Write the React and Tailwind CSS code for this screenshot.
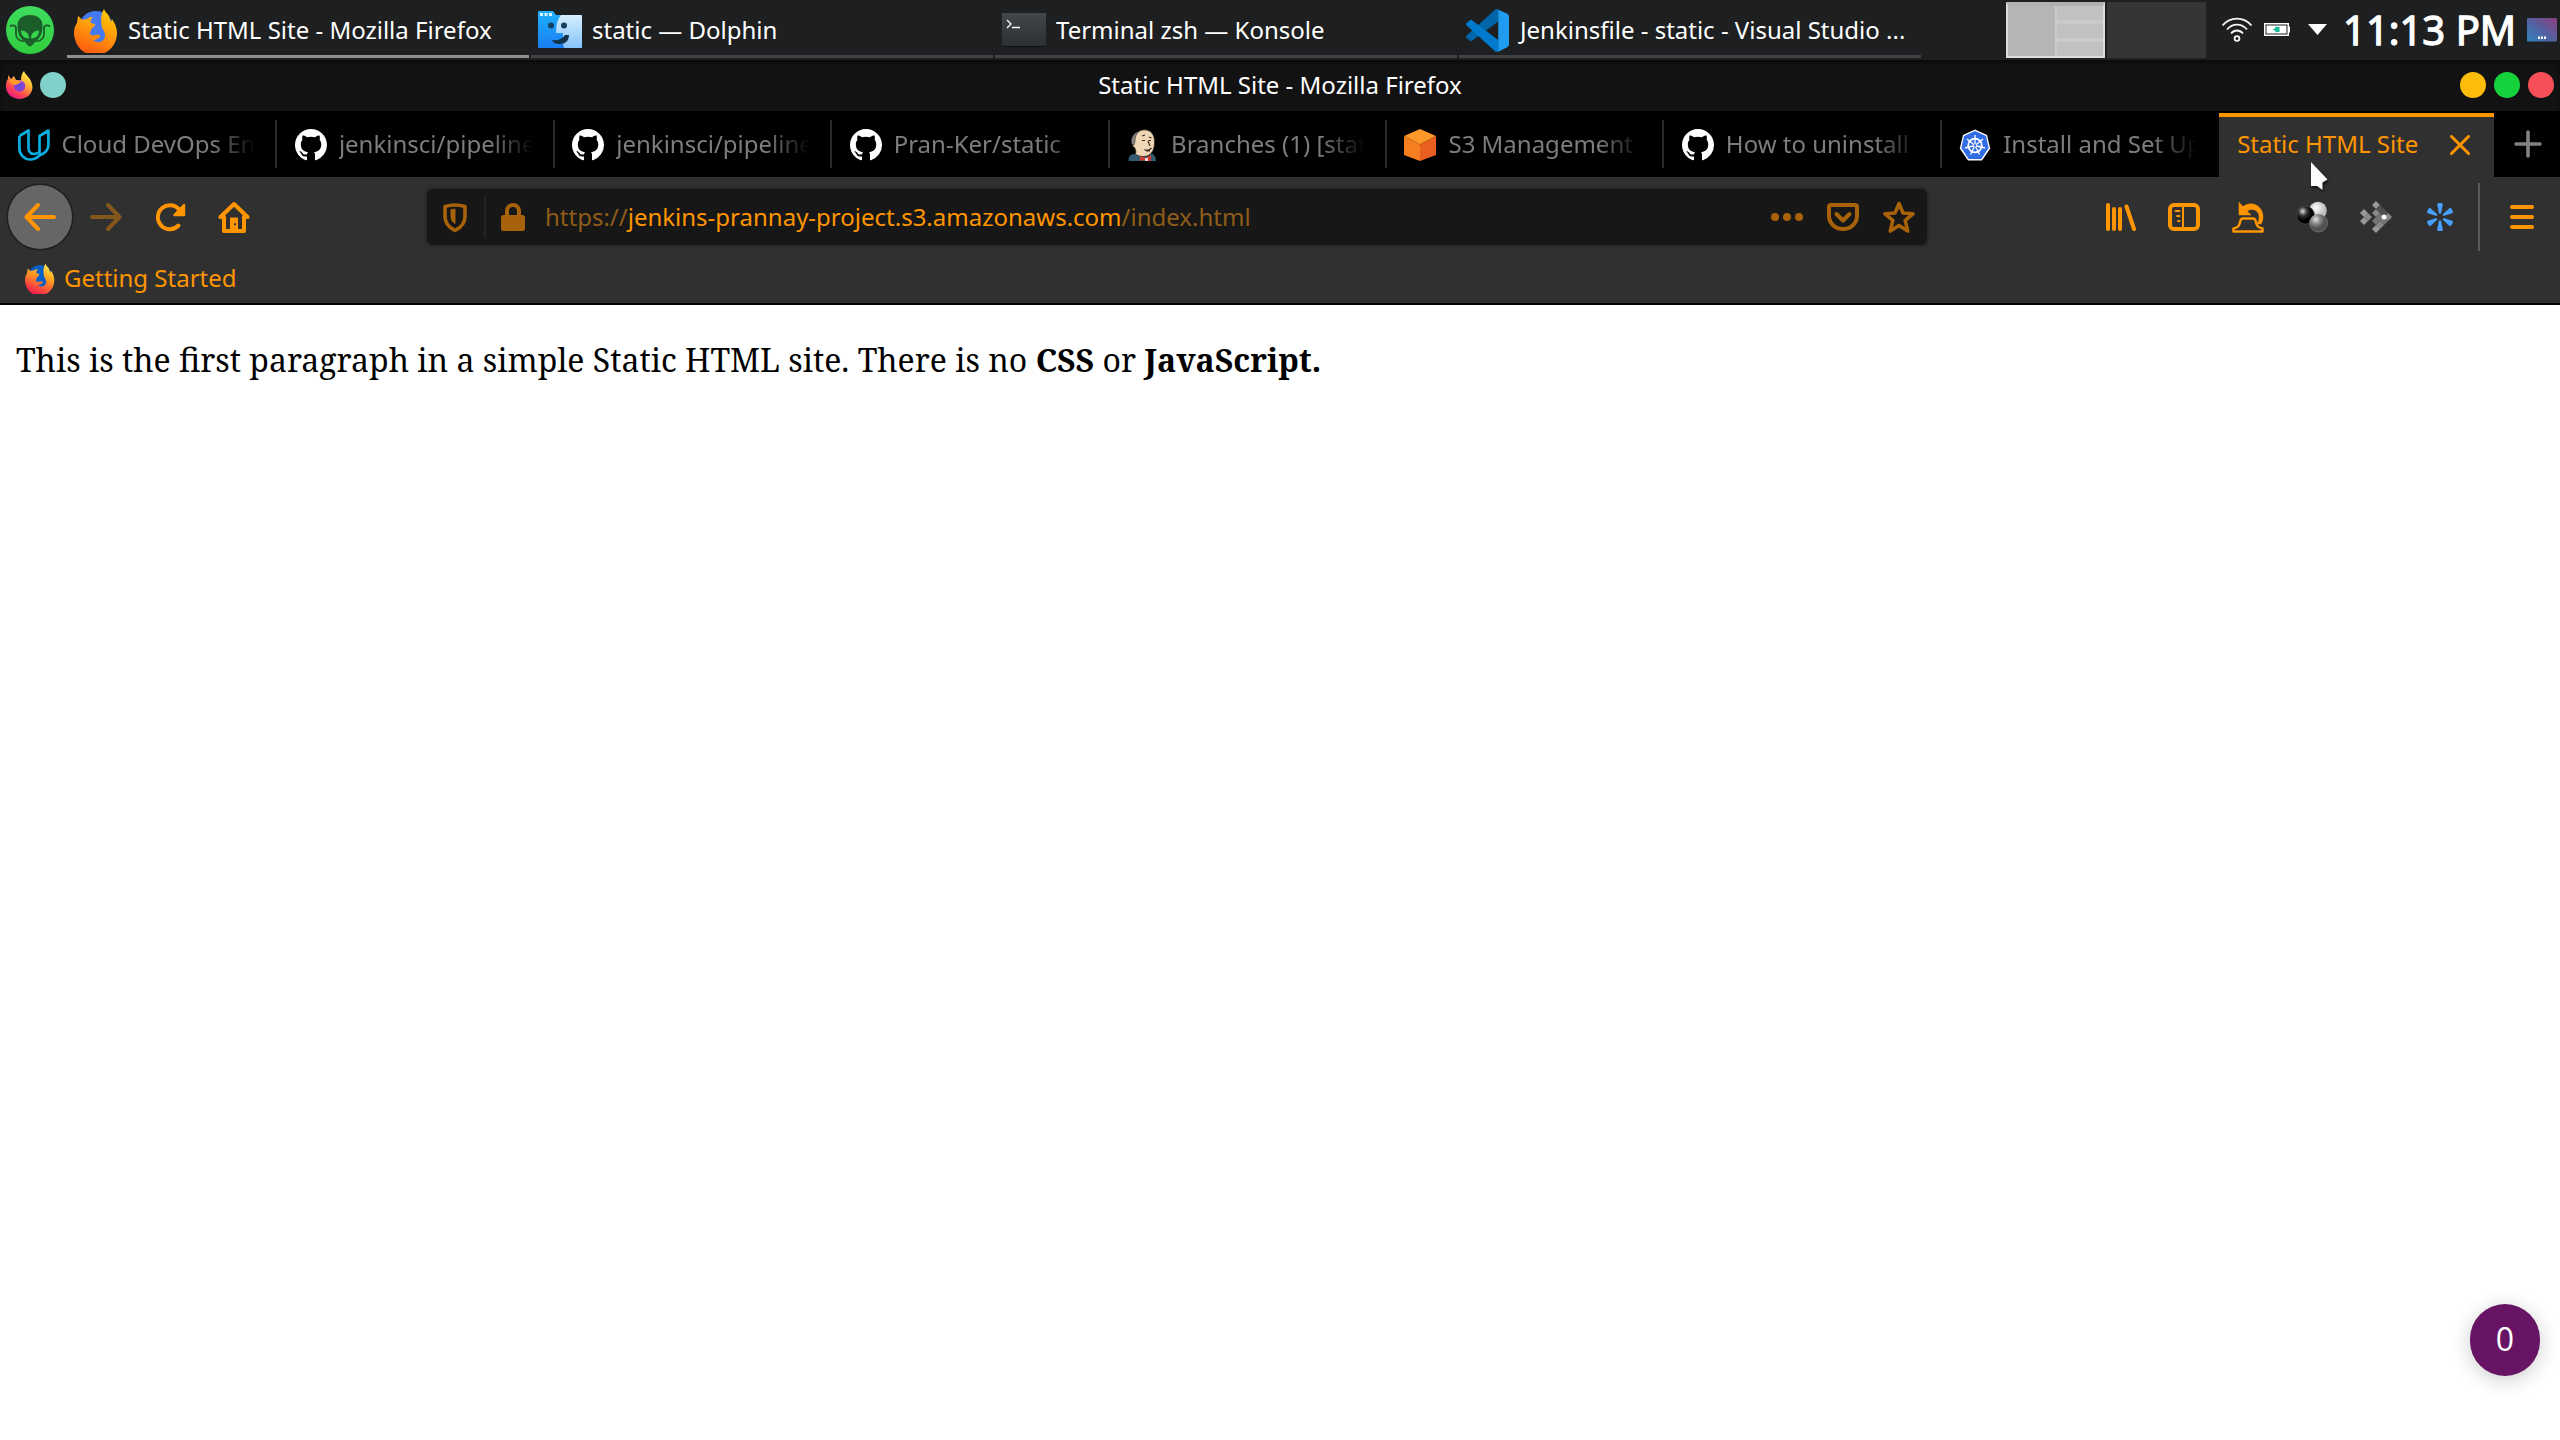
import React from "react";

const O = "#ff9500";
const D = "#a8620a";

const Alien = () => (
  <svg width="48" height="48" viewBox="0 0 48 48">
    <defs>
      <linearGradient id="alienBg" x1="0" y1="0" x2="0" y2="1">
        <stop offset="0" stopColor="#3fdc60" />
        <stop offset="1" stopColor="#30ce3c" />
      </linearGradient>
    </defs>
    <circle cx="24" cy="24" r="24" fill="url(#alienBg)" />
    <path d="M24 9c8 0 12.500 4 12.500 11 0 6-1.500 10-5 14-3 2-5.500 6.500-7.500 6.500s-4.500-4.500-7.500-6.500c-3.500-4-5-8-5-14C11.500 13 16 9 24 9Z" fill="#1b5e2a" />
    <path d="M4 20.500c2-2 6-1.500 6 2 0 6-1 9 4 12l4 1M44 20.500c-2-2-6-1.500-6 2 0 6 1 9-4 12l-4 1" fill="none" stroke="#1b5e2a" strokeWidth="1.800" />
    <path d="M15 24.500c5 0 8 3 8 8-5 0-8-3-8-8ZM33 24.500c-5 0-8 3-8 8 5 0 8-3 8-8Z" fill="#37d44c" />
  </svg>
);

const FirefoxOld = ({ w, h, id, globe, a, b, c }) => (
  <svg width={w} height={h} viewBox="0 0 44 45" preserveAspectRatio="none">
    <defs>
      <linearGradient id={id} x1="0.800" y1="0" x2="0.400" y2="1">
        <stop offset="0" stopColor={a} />
        <stop offset="0.450" stopColor={b} />
        <stop offset="1" stopColor={c} />
      </linearGradient>
    </defs>
    <circle cx="22" cy="20.500" r="17.500" fill={globe} />
    <path
      d="M4 8c2 1 3 3 4 4 2-1 4-1 5-1 2-2 4-2 6-2-2 2-3 4-2 6 2 1 4 0 4 2s-3 2-4 5c0 2-2 3-1 4 3 3 6 0 8 1 2 0 3 1 2 2-2 1-3 3-7 3 3 3 9 3 11-1 2-3 1-7-2-11-1-7-2-12 2-19 1 3 3 4 5 7l2 6 1-3c3 4 5 9 5 14 0 12-9 22-22 22S1 37 0 26c0-6 1-8 3-11Z"
      fill={`url(#${id})`}
    />
  </svg>
);

const FirefoxNew = () => (
  <svg width="27" height="28" viewBox="0 0 27 28">
    <defs>
      <linearGradient id="ffn" x1="0.850" y1="0.050" x2="0.250" y2="1">
        <stop offset="0" stopColor="#fff44f" />
        <stop offset="0.350" stopColor="#ffb436" />
        <stop offset="0.700" stopColor="#ff4a4e" />
        <stop offset="1" stopColor="#e31587" />
      </linearGradient>
      <radialGradient id="ffg"><stop offset="0" stopColor="#5a4fe0" /><stop offset="1" stopColor="#9b3fd0" /></radialGradient>
    </defs>
    <path d="M2 4l3 4 3-3 2 4 5 0c0-4 1-7 3-9 1 4 8 7 8.500 16C26.500 23 20.500 28 13.500 28S0 23 0 16C0 11 1 9 2 8Z" fill="url(#ffn)" />
    <circle cx="13.500" cy="15" r="5.800" fill="url(#ffg)" />
    <path d="M3 9c5-1 9 0 13 2-3 0-3 3-8 3-2-1-4-3-5-5Z" fill="#ff9a2a" />
  </svg>
);

const Dolphin = () => (
  <svg width="44" height="38" viewBox="0 0 44 38">
    <defs>
      <linearGradient id="dl" x1="0" y1="0" x2="0" y2="1"><stop offset="0" stopColor="#1fb2fb" /><stop offset="1" stopColor="#1a7df3" /></linearGradient>
      <linearGradient id="dr" x1="0" y1="0" x2="0" y2="1"><stop offset="0" stopColor="#d5effd" /><stop offset="1" stopColor="#86c3fb" /></linearGradient>
    </defs>
    <path d="M0 1Q0 0 1 0H15l3 4H43q1 0 1 1V36q0 1-1 1H1q-1 0-1-1Z" fill="url(#dl)" />
    <path d="M23 4H43q1 0 1 1V36q0 1-1 1H26q-2-5-1-9 0-4 0-6H18q0-12 5-18Z" fill="url(#dr)" />
    <ellipse cx="13" cy="14.500" rx="3" ry="3" fill="#123f5c" />
    <ellipse cx="26" cy="14.500" rx="3" ry="3" fill="#123f5c" />
    <path d="M14 29c6 1 10-1 13-5h4c0 6-4 9-9 9-4 0-7-1-8-4Z" fill="#12324a" />
    <path d="M2 2h3v3H2zM6.500 2h3v3h-3zM11 2h3v3h-3z" fill="#d9f2ff" />
  </svg>
);

const Konsole = () => (
  <svg width="44" height="34" viewBox="0 0 44 34">
    <defs><linearGradient id="kg" x1="0" y1="0" x2="0" y2="1"><stop offset="0" stopColor="#42474b" /><stop offset="1" stopColor="#2b2f33" /></linearGradient></defs>
    <rect y="1" width="44" height="33" rx="1" fill="#0e0f10" />
    <rect width="44" height="33" rx="1" fill="url(#kg)" />
    <path d="M5 7l4 4-4 4M10 14.500h8" fill="none" stroke="#fff" strokeWidth="1.300" />
  </svg>
);

const VSCode = () => (
  <svg width="43" height="43" viewBox="0 0 100 100">
    <path d="M1 67 9 74Q11 76 14 74L75 29V2Q69 0 65 4L1 62Q-1 65 1 67Z" fill="#0065a9" />
    <path d="M1 33 9 26Q11 24 14 26L75 72V98Q69 100 65 96L1 38Q-1 35 1 33Z" fill="#007acc" />
    <path d="M71 99Q67 100 65 96 75 102 75 95V5Q75-2 65 4 68-1 74 1L96 11Q100 13 100 18V82Q100 87 96 89L76 99Q73 100 71 99Z" fill="#1f9cf0" />
  </svg>
);

const Wifi = () => (
  <svg width="32" height="26" viewBox="0 0 32 26" fill="none" stroke="#f4f4f4" strokeWidth="1.800">
    <path d="M1.500 8.500C9-.8 23-.8 30.500 8.500M6 12.500c5.500-6.500 14.500-6.500 20 0M10 16.500c3.500-4 8.500-4 12 0" />
    <circle cx="16" cy="21.500" r="2.400" />
  </svg>
);

const Battery = () => (
  <svg width="27" height="14" viewBox="0 0 27 14">
    <rect x="0.750" y="0.750" width="23.500" height="11.500" fill="none" stroke="#fff" strokeWidth="1.500" />
    <rect x="2.500" y="2.500" width="20" height="8" fill="#fff" />
    <rect x="24.500" y="3.500" width="1.500" height="6" fill="#fff" />
    <path d="M9 6.500h3M15.500 4.500h-2.500v4h2.500M13 4c-1.500 0-2 1-2 2.500s.5 2.500 2 2.500Z" fill="#1abc9c" stroke="#1abc9c" />
  </svg>
);

const DesktopIcon = () => (
  <svg width="30" height="24" viewBox="0 0 30 24">
    <defs><linearGradient id="dg" x1="0" y1="1" x2="1" y2="0"><stop offset="0" stopColor="#2d83bd" /><stop offset="0.500" stopColor="#5560a0" /><stop offset="1" stopColor="#8e3c7c" /></linearGradient></defs>
    <rect width="30" height="23.500" rx="1" fill="url(#dg)" />
    <path d="M11 18.500h2v2.500h-2zM14 18.500h2v2.500h-2zM17 18.500h2v2.500h-2z" fill="#fff" />
  </svg>
);

const Udacity = () => (
  <svg width="32" height="32" viewBox="0 0 32 32" fill="none" stroke="#08aee0" strokeWidth="2.700" strokeLinejoin="round">
    <path d="M1.400 7 10.500 1.500V19c0 4 2.500 6 5.500 6s5.500-2 5.500-2M1.400 7V19c0 7 5 11.500 11 11.500 4 0 7-2 9-4l4-2c3-2 5-5 5-9V1.500L21.500 7V25" />
  </svg>
);

const Jenkins = () => (
  <svg width="32" height="32" viewBox="0 0 32 32">
    <path d="M1.500 32c0-5 2-6.500 6-7l15-1c4 .5 6.500 3 6.500 8Z" fill="#335b70" />
    <path d="M8 25c2-2 0-4 0-6-3-1-3-6-1-9C8 4 13 .8 17.500 .8c6.500 0 10 5 10 11.500 0 6-1 10-4.500 13-4 3-10 3-15-.3Z" fill="#efd6b4" stroke="#2a2420" strokeWidth="0.800" />
    <path d="M5 15.500C3 10 6 4 12 2.200c-3 3-4 6-4 9.800l-1 4Z" fill="#8a8580" stroke="#222" strokeWidth="0.500" />
    <path d="M15 7l3-1M22 8l2.500 1M15 11.500h3M21.500 11.500h2.500M21 12l2 5M17.500 20.500c2 1.500 5 .5 7-1.500M19 22h4" fill="none" stroke="#3b2a20" strokeWidth="1.200" />
    <path d="M13 27l5 2 6-3v6h-4l-2-1-5 1Z" fill="#d33833" />
    <path d="M18 29h3v3h-3z" fill="#fff" opacity="0.800" />
  </svg>
);

const S3 = () => (
  <svg width="32" height="32" viewBox="0 0 32 32">
    <path d="M16 0 32 7 16 15.500 0 7Z" fill="#fb9827" />
    <path d="M0 7 16 15.500V32L0 26Z" fill="#f57f20" />
    <path d="M32 7 16 15.500V32l16-6Z" fill="#e85f1f" />
  </svg>
);

const Kube = () => (
  <svg width="32" height="32" viewBox="0 0 32 32">
    <path d="M16 .5 28 6l3.200 13.500L23 31.500H9L.8 19.500 4 6Z" fill="#fff" />
    <path d="M16 2 27 7l2.600 12L22.300 30H9.700L2.400 19 5 7Z" fill="#326ce5" />
    <g fill="none" stroke="#fff">
      <circle cx="16" cy="16.500" r="6.800" strokeWidth="1.800" />
      <path d="M16 6v9M16 16.500 8 10M16 16.500l8-6.500M16 16.500 6 19M16 16.500 26 19M16 16.500l-4.500 9M16 16.500l4.500 9" strokeWidth="1.300" />
    </g>
    <circle cx="16" cy="16.500" r="1.300" fill="#326ce5" />
  </svg>
);

const Github = () => (
  <svg width="32" height="32" viewBox="0 0 16 16" fill="#fff">
    <path d="M8 0C3.580 0 0 3.580 0 8c0 3.540 2.290 6.530 5.470 7.590.4.070.55-.17.55-.38 0-.19-.01-.82-.01-1.490-2.010.37-2.530-.49-2.690-.94-.09-.23-.48-.94-.82-1.130-.28-.15-.68-.52-.01-.53.63-.01 1.080.58 1.230.82.72 1.210 1.870.87 2.330.66.07-.52.28-.87.51-1.070-1.780-.2-3.640-.89-3.640-3.950 0-.87.31-1.590.82-2.150-.08-.2-.36-1.020.08-2.120 0 0 .67-.21 2.200.82.64-.18 1.320-.27 2-.27s1.360.09 2 .27c1.530-1.040 2.200-.82 2.200-.82.44 1.100.16 1.920.08 2.120.51.56.82 1.270.82 2.150 0 3.070-1.870 3.750-3.650 3.950.29.25.54.73.54 1.480 0 1.070-.01 1.930-.01 2.200 0 .21.15.46.55.38A8.010 8.010 0 0 0 16 8c0-4.420-3.580-8-8-8Z" />
  </svg>
);

const Stroke = ({ w = 32, h = 32, color = O, sw = 4, children }) => (
  <svg width={w} height={h} viewBox={`0 0 ${w} ${h}`} fill="none" stroke={color} strokeWidth={sw} strokeLinecap="round" strokeLinejoin="round">
    {children}
  </svg>
);

const tasks = [
  { icon: <FirefoxOld w={44} h={45} id="ffa" globe="#4479f0" a="#ffcb00" b="#ff9f0a" c="#ff5a10" />, label: "Static HTML Site - Mozilla Firefox", active: true },
  { icon: <Dolphin />, label: "static — Dolphin" },
  { icon: <Konsole />, label: "Terminal zsh — Konsole" },
  { icon: <VSCode />, label: "Jenkinsfile - static - Visual Studio ..." },
];

const tabs = [
  { icon: <Udacity />, label: "Cloud DevOps En" },
  { icon: <Github />, label: "jenkinsci/pipeline" },
  { icon: <Github />, label: "jenkinsci/pipeline" },
  { icon: <Github />, label: "Pran-Ker/static" },
  { icon: <Jenkins />, label: "Branches (1) [stat" },
  { icon: <S3 />, label: "S3 Management" },
  { icon: <Github />, label: "How to uninstall" },
  { icon: <Kube />, label: "Install and Set Up" },
];

function Panel() {
  return (
    <div className="flex h-[60px] items-center bg-[#1d1f21]">
      <div className="flex w-[67px] shrink-0 pl-[6px]"><Alien /></div>
      <div className="flex h-full gap-[2px]">
        {tasks.map((t) => (
          <div key={t.label} className="flex h-full w-[462px] flex-col">
            <div className="flex h-[55px] items-center pt-[5px] pl-[7px] text-white">
              <div className="flex w-[54px]">{t.icon}</div>
              <span className="whitespace-nowrap text-[24px]">{t.label}</span>
            </div>
            <div className={t.active ? "h-[3px] bg-[#8e9091]" : "h-[3px] bg-[#424346]"} />
          </div>
        ))}
      </div>
      <div className="ml-[85px] flex h-[56px] gap-[2px]">
        <div className="flex w-[99px] gap-[2px] border-2 border-t-[4px] border-[#dcdcdc] border-t-[#b0b0b0] bg-[#cacaca]">
          <div className="w-[47px] bg-[#b5b5b5]" />
          <div className="flex flex-1 flex-col gap-[4px]">
            <div className="flex-1 bg-[#c1c1c1]" />
            <div className="flex-1 bg-[#c1c1c1]" />
            <div className="flex-1 bg-[#c1c1c1]" />
          </div>
        </div>
        <div className="w-[99px] bg-[#333537]" />
      </div>
      <div className="ml-[15px] flex w-[43px]"><Wifi /></div>
      <div className="flex w-[44px]"><Battery /></div>
      <svg className="mb-[2px]" width="19" height="11" viewBox="0 0 19 11"><path d="M0 0h19L9.500 11Z" fill="#fff" /></svg>
      <span className="ml-[16px] w-[184px] whitespace-nowrap text-[40px] leading-none text-white [-webkit-text-stroke:1.3px_#fff]">11:13 PM</span>
      <DesktopIcon />
    </div>
  );
}

function TitleBar() {
  return (
    <div className="grid h-[51px] grid-cols-3 items-center bg-[#121212] pb-[2px] shadow-[inset_0_3px_3px_#0c0c0c]">
      <div className="flex items-center gap-[7px] pl-[6px]">
        <FirefoxNew />
        <div className="size-[26px] rounded-full bg-[#7fd1c9]" />
      </div>
      <span className="text-center text-[24px] text-white">Static HTML Site - Mozilla Firefox</span>
      <div className="flex justify-end gap-[8px] pr-[6px]">
        <div className="size-[26px] rounded-full bg-[#fdbc0a]" />
        <div className="size-[26px] rounded-full bg-[#14d13c]" />
        <div className="size-[26px] rounded-full bg-[#f64f57]" />
      </div>
    </div>
  );
}

function TabBar() {
  return (
    <div className="flex h-[66px] bg-black">
      {tabs.map((t, i) => (
        <div key={i} className="flex w-[277.4px] shrink-0 items-center pt-[2px] pl-[17.500px]">
          <div className="flex w-[44px] shrink-0">{t.icon}</div>
          <div className="w-[207px] pb-[2px] whitespace-nowrap text-[24px] text-[#7d7d7d] [mask-image:linear-gradient(to_right,#000_150px,transparent_194px)]">{t.label}</div>
          <div className={i < 7 ? "-mt-[2px] ml-auto h-[48px] w-[2px] bg-[#2b2b2b]" : "hidden"} />
        </div>
      ))}
      <div className="mt-[2px] flex w-[275px] items-center border-t-4 border-[#ff9500] bg-[#303030] pb-[4px] pl-[18px] text-[24px] text-[#ff9500]">
        <span className="w-[213px] pb-[2px]">Static HTML Site</span>
        <Stroke w={20} h={20} sw={3}><path d="M1.500 1.500l17 17M18.500 1.500l-17 17" /></Stroke>
      </div>
      <div className="flex flex-1 items-center justify-center pl-[2px]">
        <Stroke w={28} h={28} color="#828282" sw={3.6}><path d="M14 2v24M2 14h24" /></Stroke>
      </div>
    </div>
  );
}

function NavBar() {
  return (
    <div className="flex h-[80px] items-center">
      <div className="ml-[8px] flex size-[64px] items-center justify-center rounded-full bg-[#666] shadow-[0_0_0_1.500px_#1f1f1f]">
        <Stroke><path d="M30 16H3M14 4 2.500 16 14 28" /></Stroke>
      </div>
      <div className="ml-[18px] flex gap-[32px]">
        <Stroke color="#84581c"><path d="M2 16h27M18 4l11.500 12L18 28" /></Stroke>
        <Stroke><path d="M24.500 24.500A12 12 0 1 1 25.500 9" /><path d="M30 4v10H20.500Z" fill={O} strokeWidth="2.500" /></Stroke>
        <Stroke>
          <path d="M2.500 16 16 3l13.500 13M6 16v14h20V16" />
          <path d="M12.500 28V17h7v11Z" fill={O} strokeWidth="1" />
          <path d="M17 23v.5" stroke="#303030" strokeWidth="2" />
        </Stroke>
      </div>
      <div className="ml-[177px] flex h-[56px] w-[1500px] items-center rounded-[6px] bg-[#171717] shadow-[0_0_3px_1px_#232323]">
        <div className="ml-[14px] flex w-[43px]">
          <Stroke w={28} color={D} sw={3.6}>
            <path d="M4 5.500q10-3 20 0v10c0 7-4 11-10 14-6-3-10-7-10-14Z" />
            <path d="M14 8.500v14c-3-2-4-4-4-7V9Z" fill={D} strokeWidth="1" />
          </Stroke>
        </div>
        <div className="h-[42px] w-[2px] bg-[#232323]" />
        <svg className="ml-[15px]" width="24" height="28" viewBox="0 0 24 28">
          <rect y="12" width="24" height="16" rx="2.500" fill={D} />
          <path d="M6 14V8a6 6 0 0 1 12 0v6" fill="none" stroke={D} strokeWidth="4" />
        </svg>
        <span className="ml-[20px] flex-1 whitespace-nowrap text-[24px] text-[#8f5c19]">https://<span className="text-[#ff9500]">jenkins-prannay-project.s3.amazonaws.com</span>/index.html</span>
        <div className="flex items-center gap-[24px] pr-[12px]">
          <svg width="32" height="32" viewBox="0 0 32 32" fill={D}><circle cx="4" cy="16" r="4" /><circle cx="16" cy="16" r="4" /><circle cx="28" cy="16" r="4" /></svg>
          <Stroke color={D}><path d="M4 4h24q2 0 2 2v9a14 13 0 0 1-28 0V6q0-2 2-2Z" /><path d="M9.500 13l6.500 6.500 6.500-6.500" /></Stroke>
          <Stroke color={D} sw={3.6}><path d="M16 2.500l4 9.500 10 .8-7.800 6.600 2.500 10.600L16 24.500 7.300 30l2.500-10.600L2 12.800l10-.8Z" /></Stroke>
        </div>
      </div>
      <div className="ml-[177px] flex items-center gap-[32px]">
        <Stroke><path d="M4 4v24M10 8v20M16 8v20M22.500 5.500 30 28" /></Stroke>
        <Stroke><rect x="2" y="4" width="28" height="24" rx="4" /><path d="M15 5v22M7.500 10h4M9 15h2.500M10 20h1.500" strokeWidth="2" /></Stroke>
        <Stroke sw={3}>
          <path d="M7 1.500v12.500h12l-4-4c6-4 13 0 12 7 0 3-1 5-3 6h5c1-2 2-4 2-7C31 5 20-1 11 5.500Z" fill={O} strokeWidth="0.500" />
          <path d="M1.500 30.500v-3c5-1 6-3 7-8q.5-2 2.500-2h10q2 0 2.500 2c1 5 2 7 7 8v3Z" fill="#303030" strokeWidth="2.500" />
        </Stroke>
        <svg width="32" height="32" viewBox="0 0 32 32">
          <defs>
            <radialGradient id="b1" cx="0.400" cy="0.350"><stop offset="0" stopColor="#fff" /><stop offset="1" stopColor="#bcbcbc" /></radialGradient>
            <radialGradient id="b2" cx="0.350" cy="0.300"><stop offset="0" stopColor="#ddd" /><stop offset="0.500" stopColor="#333" /><stop offset="1" stopColor="#000" /></radialGradient>
            <radialGradient id="b3" cx="0.350" cy="0.300"><stop offset="0" stopColor="#e0e0e0" /><stop offset="0.500" stopColor="#8b8b8b" /><stop offset="1" stopColor="#505050" /></radialGradient>
          </defs>
          <circle cx="22" cy="9.500" r="8.800" fill="url(#b1)" />
          <circle cx="9.500" cy="14" r="9" fill="url(#b2)" stroke="#666" strokeWidth="0.400" />
          <circle cx="22.500" cy="22" r="9" fill="url(#b3)" stroke="#aaa" strokeWidth="0.400" />
        </svg>
        <svg width="32" height="32" viewBox="0 0 32 32">
          <path d="M16 0l4 4-4 4-4-4ZM4 8l4 4-4 4-4-4ZM4 16l4 4-4 4-4-4ZM16 24l4 4-4 4-4-4Z" fill="#989898" />
          <path d="M8 12l4 4-4 4-4-4ZM16 8l4 4-4 4-4-4ZM28 12l4 4-4 4-4-4ZM20 20l4 4-4 4-4-4Z" fill="#8a8a8a" />
          <path d="M16 16l4 4-4 4-4-4ZM24 16l4 4-4 4-4-4ZM20 12l4 4-4 4-4-4Z" fill="#747474" />
          <path d="M20 4l8 8-4 4-8-8Z" fill="#505050" />
          <circle cx="24" cy="16" r="2.500" fill="#fff" />
        </svg>
        <svg width="32" height="32" viewBox="0 0 32 32" fill="#45a1ff">
          {[0, 60, 120, 180, 240, 300].map((r) => (
            <path key={r} transform={`rotate(${r} 16 16)`} d="M13.200 3.500q0-1.500 1.500-1.500h2.600q1.500 0 1.500 1.500L17 12.500h-2Z" />
          ))}
        </svg>
      </div>
      <div className="ml-[22px] h-[68px] w-[2px] bg-[#5a5a5a]" />
      <div className="ml-[30px] flex flex-col gap-[6px]">
        <div className="h-[4px] w-[24px] rounded-full bg-[#ff9500]" />
        <div className="h-[4px] w-[24px] rounded-full bg-[#ff9500]" />
        <div className="h-[4px] w-[24px] rounded-full bg-[#ff9500]" />
      </div>
    </div>
  );
}

export default function App() {
  return (
    <div className="relative flex h-[1440px] w-[2560px] flex-col overflow-hidden bg-white font-['Noto_Sans',sans-serif]">
      <Panel />
      <TitleBar />
      <TabBar />
      <div className="h-[128px] border-b-2 border-black bg-[#303030]">
        <NavBar />
        <div className="flex h-[42px] items-center gap-[9px] pl-[25px]">
          <FirefoxOld w={30} h={31} id="ffb" globe="#0a5fc4" a="#fff04a" b="#ff9a20" c="#f5194f" />
          <span className="text-[24px] text-[#ff9500]">Getting Started</span>
        </div>
      </div>
      <p className="mt-[33px] ml-[16px] whitespace-nowrap font-['Noto_Serif','Droid_Serif','Liberation_Serif',serif] text-[32px] leading-[44px] text-black">
        This is the first paragraph in a simple Static HTML site. There is no <b>CSS</b> or <b>JavaScript.</b>
      </p>
      <div className="absolute top-[1304px] left-[2470px] flex h-[72px] w-[70px] items-center justify-center rounded-full bg-[#671465] pb-[3px] font-['Open_Sans',sans-serif] text-[32px] text-white shadow-[0_4px_20px_rgba(0,0,0,0.2)]">
        0
      </div>
      <svg className="absolute top-[160px] left-[2309px] drop-shadow-[1px_2px_1px_#111]" width="22" height="34" viewBox="0 0 22 34">
        <path d="M2 2 18.500 19.500 13.500 22.500V30L8 26H2Z" fill="#fcfcfc" />
      </svg>
    </div>
  );
}
